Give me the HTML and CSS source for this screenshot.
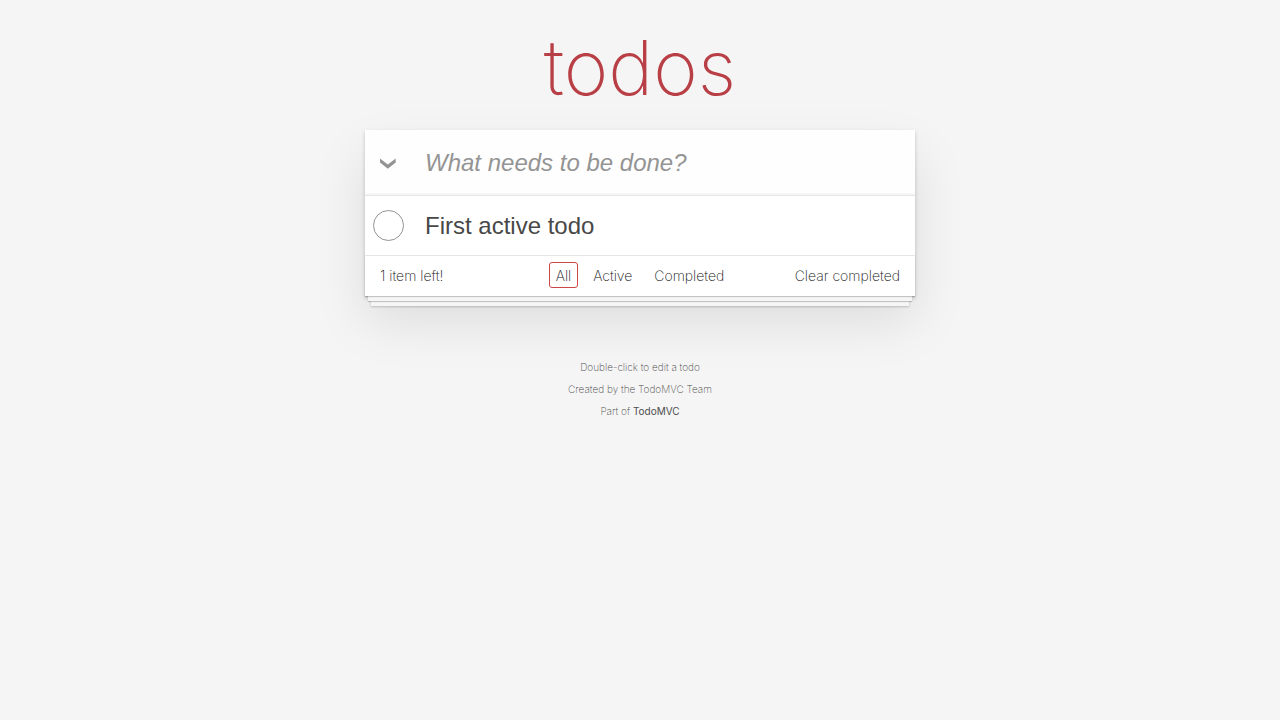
FILE: index.html
```html
<!DOCTYPE html>
<html lang="en">
<head>
<meta charset="utf-8">
<meta name="viewport" content="width=device-width, initial-scale=1">
<title>TodoMVC</title>
<link rel="stylesheet" href="styles.css">
</head>
<body>
<section class="todoapp">
  <header><h1 class="title">todos</h1></header>
  <div class="card">
    <div class="entry">
      <button class="toggle-all" type="button" aria-label="Mark all as complete">
        <svg width="17" height="13" viewBox="0 0 17 13" aria-hidden="true"><path d="M1 2.5V6.4L8.8 12.7L16.7 6.4V2.5L8.8 8.4Z" fill="#949494"/></svg>
      </button>
      <input class="new-todo" type="text" aria-label="New todo" placeholder="What needs to be done?">
    </div>
    <ul class="todo-list">
      <li class="todo">
        <input class="toggle" type="checkbox" id="todo-1">
        <label class="todo-label" for="todo-1">First active todo</label>
      </li>
    </ul>
    <footer class="footer">
      <span class="count">1 item left!</span>
      <nav class="filters" aria-label="Filters">
        <a class="filter selected" href="#/">All</a>
        <a class="filter" href="#/active">Active</a>
        <a class="filter" href="#/completed">Completed</a>
      </nav>
      <button class="clear" type="button">Clear completed</button>
    </footer>
  </div>
</section>
<footer class="info">
  <p>Double-click to edit a todo</p>
  <p>Created by the TodoMVC Team</p>
  <p>Part of <a class="info-link" href="https://todomvc.com">TodoMVC</a></p>
</footer>
</body>
</html>
```
FILE: styles.css
```css
* { box-sizing: border-box; }

html { background: #f5f5f5; }

body {
  margin: 0;
  color: #111;
  font-family: Inter, "Liberation Sans", Arial, sans-serif;
  font-size: 14px;
  font-weight: 200;
  line-height: 20px;
}

.todoapp {
  min-width: 230px;
  max-width: 550px;
  margin: 0 auto;
}

.title {
  margin: 0;
  height: 130px;
  padding-top: 20px;
  color: #b83f45;
  font-size: 76px;
  font-weight: 200;
  line-height: 94px;
  text-align: center;
}

.card {
  background: #fff;
  box-shadow: 0 2px 4px rgba(0, 0, 0, 0.2), 0 25px 50px rgba(0, 0, 0, 0.1);
}

.entry {
  display: flex;
  height: 65px;
  background: #fefefe;
  box-shadow: inset 0 -2px 1px rgba(0, 0, 0, 0.03);
}

.toggle-all {
  display: flex;
  flex: 0 0 45px;
  align-items: center;
  justify-content: center;
  padding: 0;
  border: 0;
  background: none;
}

.new-todo {
  flex: 1;
  min-width: 0;
  padding: 0 15px;
  border: 0;
  outline: 0;
  background: transparent;
  color: #111;
  font: 24px/34px "Helvetica Neue", "Liberation Sans", Arial, sans-serif;
}

.new-todo::placeholder {
  color: #949494;
  font-style: italic;
  opacity: 1;
}

.todo-list {
  margin: 0;
  padding: 0;
  border-top: 1px solid #e6e6e6;
  list-style: none;
}

.todo {
  display: flex;
  align-items: center;
  height: 59px;
}

.toggle {
  flex: none;
  width: 31px;
  height: 31px;
  margin: 0 7px 1px 8px;
  border: 1px solid #949494;
  border-radius: 50%;
  appearance: none;
}

.todo-label {
  padding: 0 14px;
  color: #484848;
  font-family: "Helvetica Neue", "Liberation Sans", Arial, sans-serif;
  font-size: 24px;
  font-weight: 400;
  line-height: 30px;
}

.footer {
  display: grid;
  grid-template-columns: 1fr auto 1fr;
  align-items: baseline;
  min-height: 41px;
  padding: 6px 15px 8px;
  border-top: 1px solid #e6e6e6;
  box-shadow: 0 1px 1px rgba(0, 0, 0, 0.2), 0 8px 0 -3px #f6f6f6,
    0 9px 1px -3px rgba(0, 0, 0, 0.2), 0 16px 0 -6px #f6f6f6,
    0 17px 2px -6px rgba(0, 0, 0, 0.2);
}

.filters { display: flex; gap: 8px; }

.filter {
  padding: 3px 6px 1px;
  border: 1px solid transparent;
  border-radius: 3px;
  color: inherit;
  text-decoration: none;
}

.selected { border-color: #ce4646; }

.clear {
  justify-self: end;
  padding: 0;
  border: 0;
  background: none;
  color: inherit;
  font: inherit;
}

.info {
  margin-top: 60px;
  color: #4d4d4d;
  font-size: 10px;
  line-height: 22px;
  text-align: center;
}

.info p { margin: 0; }

.info-link {
  color: inherit;
  font-weight: 400;
  text-decoration: none;
}
```
